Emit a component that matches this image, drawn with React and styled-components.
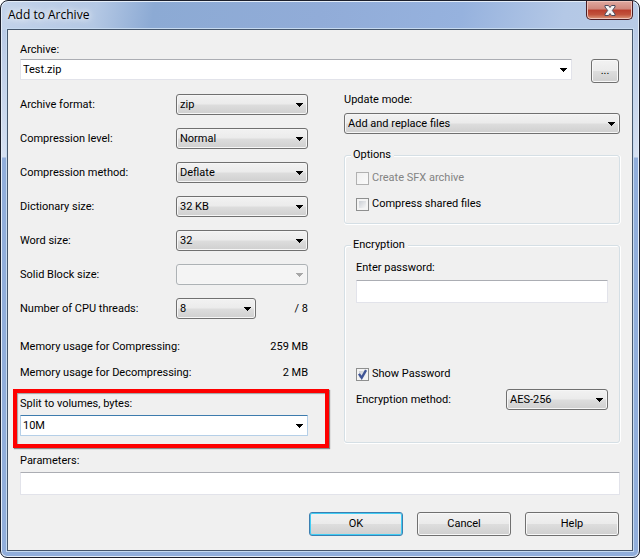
import React from 'react';
import styled, { createGlobalStyle } from 'styled-components';

const ROWS = [
    { id: 'format', label: 'Archive format:', value: 'zip' },
    { id: 'level', label: 'Compression level:', value: 'Normal' },
    { id: 'method', label: 'Compression method:', value: 'Deflate' },
    { id: 'dictionary', label: 'Dictionary size:', value: '32 KB' },
    { id: 'word', label: 'Word size:', value: '32' },
    { id: 'solid', label: 'Solid Block size:', value: '', disabled: true },
];

const Arrow = () => (
    <ArrowIcon viewBox="0 0 7 4" aria-hidden="true">
        <path d="M0 0h7v1h-1v1h-1v1h-1v1h-1v-1h-1v-1h-1v-1h-1z" fill="currentColor" />
    </ArrowIcon>
);

const DropDown = ({ id, value, disabled, width }) => (
    <SelectWrap $width={width} $disabled={disabled}>
        <Select id={id} disabled={disabled} defaultValue={value}>
            <option>{value}</option>
        </Select>
        <Arrow />
    </SelectWrap>
);

const ComboBox = ({ id, value, focused }) => (
    <Combo $focused={focused}>
        <ComboInput id={id} type="text" defaultValue={value} />
        <ComboButton type="button" aria-label="Show list"><Arrow /></ComboButton>
    </Combo>
);

const CheckRow = ({ id, label, checked, disabled }) => (
    <Check $disabled={disabled}>
        <CheckBox id={id} type="checkbox" defaultChecked={checked} disabled={disabled} />
        <label htmlFor={id}>{label}</label>
    </Check>
);

const App = () => {
    return (
        <Window>
            <GlobalStyle />
            <TitleBar>
                <Title>Add to Archive</Title>
                <CloseButton type="button" aria-label="Close">
                    <svg width="12" height="11" viewBox="0 0 12 11" aria-hidden="true">
                        <path d="M1 .5h3.500L6 2.500 7.500.5H11v1.500L8.300 5.500 11 9v1.500H7.500L6 8.500l-1.500 2H1V9l2.700-3.500L1 2z" fill="#f4f4f4" stroke="#4d4b5c" />
                    </svg>
                </CloseButton>
            </TitleBar>
            <Client>
                <ArchiveRow>
                    <Field>
                        <label htmlFor="archive">Archive:</label>
                        <ComboBox id="archive" value="Test.zip" />
                    </Field>
                    <BrowseButton type="button">...</BrowseButton>
                </ArchiveRow>

                <Columns>
                    <Left>
                        {ROWS.map((row) => (
                            <Row key={row.id}>
                                <label htmlFor={row.id}>{row.label}</label>
                                <DropDown {...row} width="132px" />
                            </Row>
                        ))}
                        <Row>
                            <label htmlFor="threads">Number of CPU threads:</label>
                            <Threads>
                                <DropDown id="threads" value="8" width="80px" />
                                <span>/ 8</span>
                            </Threads>
                        </Row>
                        <Memory>
                            <MemoryRow><span>Memory usage for Compressing:</span><span>259 MB</span></MemoryRow>
                            <MemoryRow><span>Memory usage for Decompressing:</span><span>2 MB</span></MemoryRow>
                        </Memory>
                        <Highlight>
                            <label htmlFor="split">Split to volumes, bytes:</label>
                            <ComboBox id="split" value="10M" focused />
                        </Highlight>
                    </Left>

                    <Right>
                        <UpdateField>
                            <label htmlFor="update">Update mode:</label>
                            <DropDown id="update" value="Add and replace files" width="100%" />
                        </UpdateField>
                        <Options>
                            <Legend>Options</Legend>
                            <CheckRow id="sfx" label="Create SFX archive" disabled />
                            <CheckRow id="shared" label="Compress shared files" />
                        </Options>
                        <Encryption>
                            <Legend>Encryption</Legend>
                            <PasswordField>
                                <label htmlFor="password">Enter password:</label>
                                <TextInput id="password" type="text" />
                            </PasswordField>
                            <CheckRow id="show" label="Show Password" checked />
                            <MethodRow>
                                <label htmlFor="encmethod">Encryption method:</label>
                                <DropDown id="encmethod" value="AES-256" width="102px" />
                            </MethodRow>
                        </Encryption>
                    </Right>
                </Columns>

                <Parameters>
                    <label htmlFor="params">Parameters:</label>
                    <TextInput id="params" type="text" />
                </Parameters>

                <Buttons>
                    <PushButton type="button" $primary>OK</PushButton>
                    <PushButton type="button">Cancel</PushButton>
                    <PushButton type="button">Help</PushButton>
                </Buttons>
            </Client>
        </Window>
    );
};

const GlobalStyle = createGlobalStyle`
    * {
        box-sizing: border-box;
    }

    body {
        margin: 0;
        background: #fff;
        font: 11px/14px Roboto, "Liberation Sans", sans-serif;
        color: #000;
    }

    input, select, button {
        font: inherit;
        color: inherit;
        margin: 0;
    }
`;

const Window = styled.main`
    display: flex;
    flex-direction: column;
    min-height: 100vh;
    padding: 0 6px 6px;
    border: 1px solid #1b1f2c;
    border-radius: 8px 8px 7px 7px;
    background:
        linear-gradient(100deg, #c3d3ea 0, #b4c8e4 15%, #8caad4 24%, #91acd8 50%, #96b2de 72%, #b4c8e6 88%, #b8cbe6 100%) top / 100% 29px no-repeat,
        linear-gradient(#b9cae6 0, #d5e0f1 127px, #91aedb 128px) 0 29px no-repeat;
    box-shadow: inset 0 0 0 1px #e4edf8;
`;

const TitleBar = styled.header`
    display: flex;
    justify-content: space-between;
    align-items: flex-start;
    height: 28px;
`;

const Title = styled.h1`
    margin: 0;
    padding: 5px 1px;
    font: 12px/18px "Open Sans", "Noto Sans", sans-serif;
    text-shadow: 0 0 6px #fff, 0 0 10px #fff;
`;

const CloseButton = styled.button`
    display: flex;
    align-items: center;
    justify-content: center;
    width: 47px;
    height: 19px;
    padding: 0;
    border: 1px solid #4a1d24;
    border-top: 0;
    border-radius: 0 0 5px 5px;
    background: linear-gradient(#e0a9a0 0, #d0877c 45%, #b93d2c 50%, #c1523c 75%, #dc9a7c 100%);
    box-shadow: inset 0 0 0 1px #eec3ba;
`;

const Client = styled.section`
    flex: 1;
    padding: 13px 12px;
    border: 1px solid #45566c;
    outline: 1px solid #c6daf0;
    background: #f0f0f0;
`;

const Field = styled.div`
    display: flex;
    flex-direction: column;
    flex: 1;
    gap: 2px;
`;

const ArchiveRow = styled.div`
    display: flex;
    align-items: flex-end;
    gap: 19px;
    padding-right: 1px;

    ${Field} {
        padding-bottom: 3px;
    }
`;

const Columns = styled.div`
    display: grid;
    grid-template-columns: 288px minmax(0, 1fr);
    gap: 36px;
    margin-top: 10px;
`;

const Left = styled.div`
    display: flex;
    flex-direction: column;
    gap: 13px;
    padding-top: 1px;
`;

const Right = styled.div`
    display: flex;
    flex-direction: column;
`;

const Row = styled.div`
    display: flex;
    align-items: center;
    justify-content: space-between;
`;

const Threads = styled.div`
    display: flex;
    align-items: center;
    justify-content: space-between;
    width: 132px;
`;

const Memory = styled.div`
    display: flex;
    flex-direction: column;
    gap: 12px;
    padding-top: 8px;
`;

const MemoryRow = styled.div`
    display: flex;
    justify-content: space-between;
`;

const Highlight = styled.div`
    display: flex;
    flex-direction: column;
    gap: 4px;
    margin: -4px -21px 0 -7px;
    padding: 4px 17px 8px 3px;
    border: 4px solid #fe0000;
    box-shadow: 1px 1px 1px #8a8a8a, inset 1px 1px 1px #a0a0a0;
`;

const SelectWrap = styled.span`
    position: relative;
    display: block;
    width: ${(props) => props.$width};
    color: ${(props) => (props.$disabled ? '#a7a7a7' : '#000')};
`;

const Select = styled.select`
    appearance: none;
    display: block;
    width: 100%;
    height: 21px;
    padding: 1px 20px 0 3px;
    border: 1px solid #707070;
    border-radius: 3px;
    background: linear-gradient(#f2f2f2 0, #ebebeb 48%, #dddddd 52%, #cfcfcf 100%);
    box-shadow: inset 0 0 0 1px #f6f6f6;

    &:disabled {
        border-color: #adb2b5;
        background: #f4f4f4;
        opacity: 1;
    }
`;

const ArrowIcon = styled.svg`
    width: 7px;
    height: 4px;
    shape-rendering: crispEdges;

    ${SelectWrap} & {
        position: absolute;
        top: 9px;
        right: 5px;
        pointer-events: none;
    }
`;

const Combo = styled.div`
    display: flex;
    height: 21px;
    border: 1px solid ${(props) => (props.$focused ? '#b5cfe7' : '#e2e3ea')};
    border-top-color: ${(props) => (props.$focused ? '#3d7bad' : '#abadb3')};
    border-radius: 1px;
    background: #fff;
`;

const ComboInput = styled.input`
    flex: 1;
    min-width: 0;
    padding: 0 2px;
    border: 0;
    outline: 0;
    background: transparent;
`;

const ComboButton = styled.button`
    display: flex;
    align-items: center;
    justify-content: center;
    width: 15px;
    padding: 0;
    border: 0;
    background: transparent;
`;

const TextInput = styled.input`
    width: 100%;
    height: 23px;
    padding: 0 3px;
    border: 1px solid #e2e3ea;
    border-top-color: #abadb3;
    border-radius: 1px;
    background: #fff;
`;

const UpdateField = styled.div`
    display: flex;
    flex-direction: column;
    gap: 6px;
`;

const Group = styled.fieldset`
    display: flex;
    flex-direction: column;
    min-width: 0;
    border: 1px solid #d5dfe5;
    border-radius: 3px;
    box-shadow: inset 1px 1px 0 #fff, 0 1px 0 #fff, 1px 0 0 #fff;
`;

const Options = styled(Group)`
    gap: 12px;
    margin: 14px 0 0;
    padding: 9px 11px 12px;
`;

const Encryption = styled(Group)`
    margin: 14px 0 0;
    padding: 9px 11px 32px;
`;

const Legend = styled.legend`
    margin-left: -5px;
    padding: 0 3px 0 2px;
    background: #f0f0f0;
`;

const Check = styled.div`
    display: flex;
    align-items: center;
    gap: 3px;
    color: ${(props) => (props.$disabled ? '#838383' : '#000')};
`;

const CheckBox = styled.input`
    appearance: none;
    width: 13px;
    height: 13px;
    border: 1px solid #8e8f8f;
    background: linear-gradient(135deg, #cbcfd5, #f6f6f6) content-box, #f4f4f4;
    padding: 2px;

    &:checked {
        background:
            url("data:image/svg+xml,%3Csvg xmlns='http://www.w3.org/2000/svg' viewBox='0 0 11 11'%3E%3Cpath d='M2.500 5l2.300 3.300L8.500 1.800' fill='none' stroke='%233f5496' stroke-width='2'/%3E%3C/svg%3E") border-box,
            linear-gradient(135deg, #cbcfd5, #f6f6f6) content-box,
            #f4f4f4;
    }

    &:disabled {
        border-color: #b1b1b1;
        background: linear-gradient(135deg, #f0f0f0, #fbfbfb);
    }
`;

const PasswordField = styled.div`
    display: flex;
    flex-direction: column;
    gap: 5px;
    padding-bottom: 64px;
`;

const MethodRow = styled(Row)`
    margin-top: 8px;
`;

const Parameters = styled.div`
    display: flex;
    flex-direction: column;
    gap: 4px;
    margin-top: 6px;
`;

const Buttons = styled.div`
    display: flex;
    justify-content: flex-end;
    gap: 14px;
    margin-top: 17px;
    padding-right: 1px;
`;

const PushButton = styled.button`
    width: 94px;
    height: 24px;
    padding: 0;
    border: 1px solid ${(props) => (props.$primary ? '#3c7fb1' : '#707070')};
    border-radius: 3px;
    background: linear-gradient(#f2f2f2 0, #ebebeb 48%, #dddddd 52%, #cfcfcf 100%);
    box-shadow: inset 0 0 0 1px ${(props) => (props.$primary ? '#41cdf4' : '#f8f8f8')};
`;

const BrowseButton = styled(PushButton)`
    width: 28px;
`;

export default App;
